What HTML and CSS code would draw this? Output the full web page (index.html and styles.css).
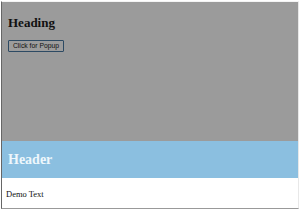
FILE: index.html
```html
<!DOCTYPE html>
<html>
<head>
    <meta name="viewport" content="width=device-width, initial-scale=1">
    <link rel="stylesheet" href="styles.css">
</head>
<body>

<div class="window">
    <div class="page">
        <h1 class="title">Heading</h1>
        <button class="open-btn" type="button">Click for Popup</button>
    </div>
    <div class="popup">
        <div class="popup-header">Header</div>
        <div class="popup-body">Demo Text</div>
    </div>
</div>

</body>
</html>
```

FILE: styles.css
```css
body {
  margin: 0;
  background: #fff;
  font-family: "Liberation Serif", "Times New Roman", serif;
}
* {
  box-sizing: border-box;
}

.window {
  height: 208px;
  margin: 1px 1px 0 1px;
  border-top: 1px solid #f4f4f4;
  border-left: 1px solid #666;
  border-right: 1px solid #e8e8e8;
  border-bottom: 1px solid #999;
  display: flex;
  flex-direction: column;
}

.page {
  height: 139px;
  background-color: #9b9b9b;
  padding: 13px 6px 0 6px;
}

.title {
  margin: 0;
  font-size: 13px;
  font-weight: bold;
  color: #111;
  line-height: 16px;
}

.open-btn {
  display: block;
  margin-top: 9px;
  width: 56px;
  height: 12px;
  padding: 0;
  background-color: #9c9c9c;
  border: 1px solid #2d4a63;
  border-radius: 1px;
  font-family: "Liberation Sans", Arial, sans-serif;
  font-size: 6.8px;
  line-height: 10px;
  color: #111;
}

.popup-header {
  height: 37px;
  background-color: #8bbfe0;
  color: #eef7fc;
  font-weight: bold;
  font-size: 14px;
  padding: 11px 6px 0 6px;
}

.popup-body {
  flex: 1;
  background: #fff;
  font-size: 8.5px;
  padding: 11px 4px 0 4px;
  color: #111;
}
```
